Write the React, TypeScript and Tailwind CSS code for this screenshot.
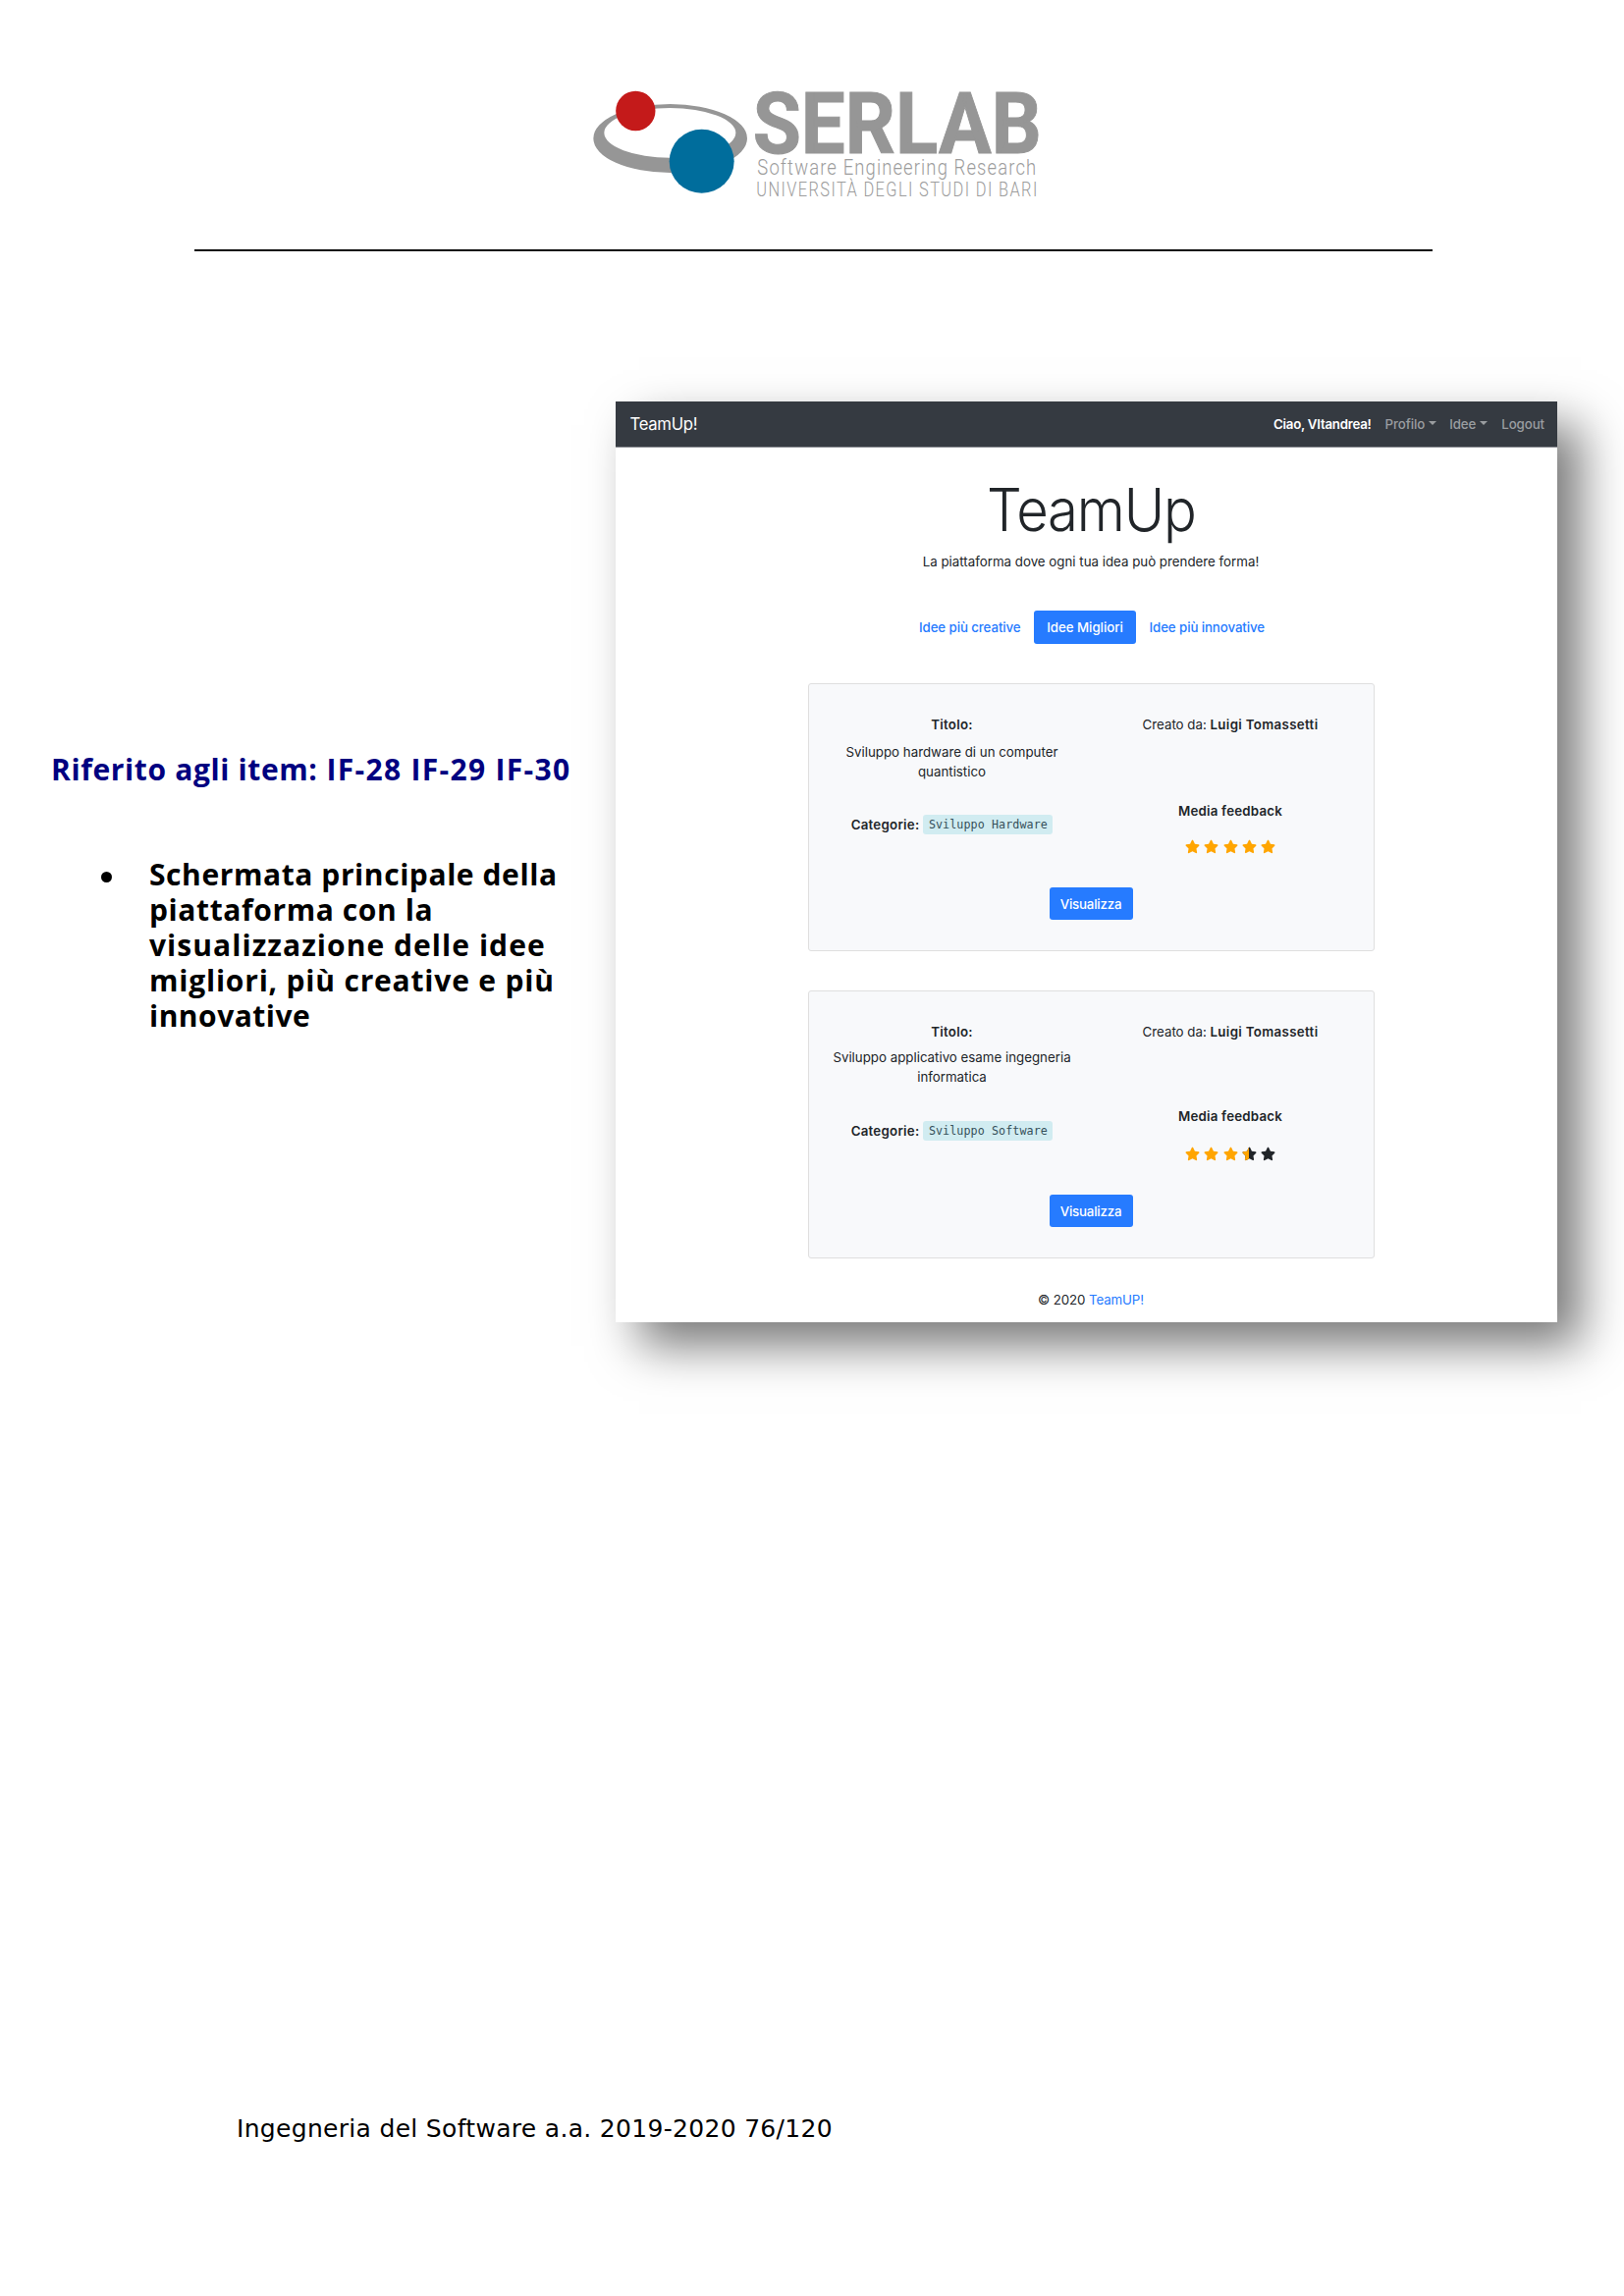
import { FaStar } from "react-icons/fa";

type Idea = {
  title: [string, string];
  category: string;
  rating: number;
  titleGap: string;
  bodyGap: string;
  feedbackGap: string;
  starsGap: string;
};

const ideas: Idea[] = [
  {
    title: ["Sviluppo hardware di un computer", "quantistico"],
    category: "Sviluppo Hardware",
    rating: 5,
    titleGap: "mt-[8px]",
    bodyGap: "mt-[34px]",
    feedbackGap: "mt-[68px]",
    starsGap: "mt-[19px]",
  },
  {
    title: ["Sviluppo applicativo esame ingegneria", "informatica"],
    category: "Sviluppo Software",
    rating: 3.5,
    titleGap: "mt-[6px]",
    bodyGap: "mt-[35px]",
    feedbackGap: "mt-[66px]",
    starsGap: "mt-[21px]",
  },
];

function Logo() {
  return (
    <svg className="block h-[140px] w-[500px] overflow-visible" viewBox="0 0 1500 420" role="img" aria-label="SERLAB">
      <path
        fill="#969696"
        fillRule="evenodd"
        d="M73 213a235 105 0 1 0 470 0a235 105 0 1 0 -470 0ZM106 196a201 76 0 1 0 402 0a201 76 0 1 0 -402 0Z"
      />
      <circle cx="202" cy="129" r="60.5" fill="#c41a1a" />
      <ellipse cx="404" cy="283" rx="99" ry="97.5" fill="#006d9c" />
      <text
        x="560"
        y="257"
        fill="#969696"
        stroke="#969696"
        strokeWidth="3"
        fontFamily="Roboto, sans-serif"
        fontWeight="700"
        fontSize="260"
        textLength="882"
        lengthAdjust="spacingAndGlyphs"
      >
        SERLAB
      </text>
      <text x="574" y="325" fill="#9c9c9c" fontFamily="Roboto, sans-serif" fontWeight="300" fontSize="65" letterSpacing="4" textLength="855" lengthAdjust="spacingAndGlyphs">
        Software Engineering Research
      </text>
      <text x="571" y="389" fill="#9c9c9c" fontFamily="Roboto, sans-serif" fontWeight="300" fontSize="59" letterSpacing="5" textLength="862" lengthAdjust="spacingAndGlyphs">
        UNIVERSITÀ DEGLI STUDI DI BARI
      </text>
    </svg>
  );
}

function Caret() {
  return <span className="mb-[1px] ml-[4px] h-0 w-0 border-x-[4px] border-t-[4px] border-x-transparent border-t-current" />;
}

function Star({ fill }: { fill: number }) {
  if (fill === 1) return <FaStar size={15} className="block text-[#ffa500]" />;
  return (
    <span className="relative block h-[15px] w-[15px]">
      <FaStar size={15} className="block text-[#212529]" />
      <span className="absolute top-0 left-0 block h-full overflow-hidden" style={{ width: `${fill * 100}%` }}>
        <FaStar size={15} className="block max-w-none text-[#ffa500]" />
      </span>
    </span>
  );
}

function IdeaCard({ idea }: { idea: Idea }) {
  return (
    <article className="flex h-[273px] w-[577px] flex-col items-center rounded-[3px] border border-[#dfdfdf] bg-[#f8f9fb]">
      <div className="flex h-[207px] w-full shrink-0 pt-[31px]">
        <section className="flex w-[292px] flex-col items-center">
          <b className="h-5 font-semibold tracking-[0.25px]">Titolo:</b>
          <p className={`text-center ${idea.titleGap}`}>
            {idea.title[0]}
            <br />
            {idea.title[1]}
          </p>
          <div className={`flex h-5 items-center gap-[4px] ${idea.bodyGap}`}>
            <b className="font-semibold tracking-[0.25px]">Categorie:</b>
            <code className="block h-[20px] rounded-[3px] bg-[#d1ecf1] px-[5.5px] font-['DejaVu_Sans_Mono',monospace] text-[11.7px] leading-[20px] tracking-[0.08px] text-[#35505a]">
              {idea.category}
            </code>
          </div>
        </section>
        <section className="flex w-[275px] flex-col items-center">
          <p className="h-5 whitespace-pre">
            Creato da: <b className="font-semibold tracking-[0.33px]">Luigi Tomassetti</b>
          </p>
          <b className={`h-5 font-semibold tracking-[0.2px] ${idea.feedbackGap}`}>Media feedback</b>
          <div className={`flex gap-[4.1px] ${idea.starsGap}`}>
            {[0, 1, 2, 3, 4].map((i) => (
              <Star key={i} fill={Math.max(0, Math.min(1, idea.rating - i))} />
            ))}
          </div>
        </section>
      </div>
      <button className="h-[33px] w-[85px] rounded-[3px] bg-[#267bff] font-medium tracking-[-0.2px] text-white">Visualizza</button>
    </article>
  );
}

function TeamUpPage() {
  return (
    <div className="flex h-[938px] w-[959px] shrink-0 flex-col items-center bg-white font-[Inter,sans-serif] text-[13.3px] leading-[20px] text-[#212529] shadow-[24px_24px_46px_rgba(0,0,0,0.53)]">
      <nav className="flex h-[46.5px] w-full shrink-0 items-center border-b border-[#8b8d93] bg-[#353a41] pr-[13px] pl-[14.5px] text-[#9a9da0]">
        <span className="mr-auto text-[16.7px] tracking-[-0.3px] text-white">TeamUp!</span>
        <div className="flex items-center">
          <span className="font-semibold tracking-[-0.25px] text-white">Ciao, VItandrea!</span>
          <span className="ml-[14px] flex items-center font-medium tracking-[-0.1px]">
            Profilo
            <Caret />
          </span>
          <span className="ml-[13px] flex items-center font-medium tracking-[-0.1px]">
            Idee
            <Caret />
          </span>
          <span className="ml-[14px] font-medium tracking-[-0.1px]">Logout</span>
        </div>
      </nav>
      <main className="flex w-full flex-col items-center pl-[9px]">
        <h1 className="mt-[23.5px] h-[80px] origin-center scale-x-[0.93] text-[60.5px] leading-[80px] font-light tracking-[-1.3px]">TeamUp</h1>
        <p className="mt-[3px]">La piattaforma dove ogni tua idea può prendere forma!</p>
        <div className="mt-[40px] ml-[2px] flex h-[34px] items-center font-medium whitespace-nowrap text-[#267bff]">
          <a className="w-[117px] tracking-[-0.1px]">Idee più creative</a>
          <a className="h-[34px] w-[104px] rounded-[3px] bg-[#267bff] text-center leading-[34px] tracking-[-0.05px] text-white">Idee Migliori</a>
          <a className="w-[131px] pl-[13.5px] tracking-[-0.1px]">Idee più innovative</a>
        </div>
        <div className="mt-[40px] flex flex-col gap-[40px]">
          {ideas.map((idea) => (
            <IdeaCard key={idea.category} idea={idea} />
          ))}
        </div>
        <footer className="mt-[32px] tracking-[-0.1px]">
          © 2020 <a className="text-[#267bff]">TeamUP!</a>
        </footer>
      </main>
    </div>
  );
}

export default function App() {
  return (
    <div className="flex h-[2339px] w-[1654px] flex-col overflow-hidden bg-white text-black">
      <header className="mr-[195px] ml-[198px] flex h-[256px] shrink-0 flex-col border-b-2 border-[#0b0b0b] pt-[70px] pl-[382px]">
        <Logo />
      </header>
      <div className="mt-[153px] flex h-[938px]">
        <aside className="w-[627px] shrink-0 pt-[357px] pl-[52px] font-['Open_Sans',sans-serif] text-[30px] leading-[36px] font-bold">
          <h2 className="tracking-[1.3px] whitespace-nowrap text-[#000080]">
            <span className="tracking-[0.63px]">Riferito agli item:</span> IF-28 IF-29 IF-30
          </h2>
          <div className="mt-[71px] flex">
            <span className="mt-[15px] mr-[38px] ml-[51px] h-[11px] w-[11px] shrink-0 rounded-full bg-black" />
            <p className="whitespace-nowrap">
              <span className="tracking-[0.58px]">Schermata principale della</span>
              <br />
              <span className="tracking-[0.6px]">piattaforma con la</span>
              <br />
              <span className="tracking-[1.05px]">visualizzazione delle idee</span>
              <br />
              <span className="tracking-[0.8px]">migliori, più creative e più</span>
              <br />
              <span className="tracking-[0.5px]">innovative</span>
            </p>
          </div>
        </aside>
        <TeamUpPage />
      </div>
      <footer className="mt-[807px] pl-[241px] font-['DejaVu_Sans',Verdana,sans-serif] text-[25px] leading-[30px] tracking-[0.31px]">
        Ingegneria del Software a.a. 2019-2020 76/120
      </footer>
    </div>
  );
}
